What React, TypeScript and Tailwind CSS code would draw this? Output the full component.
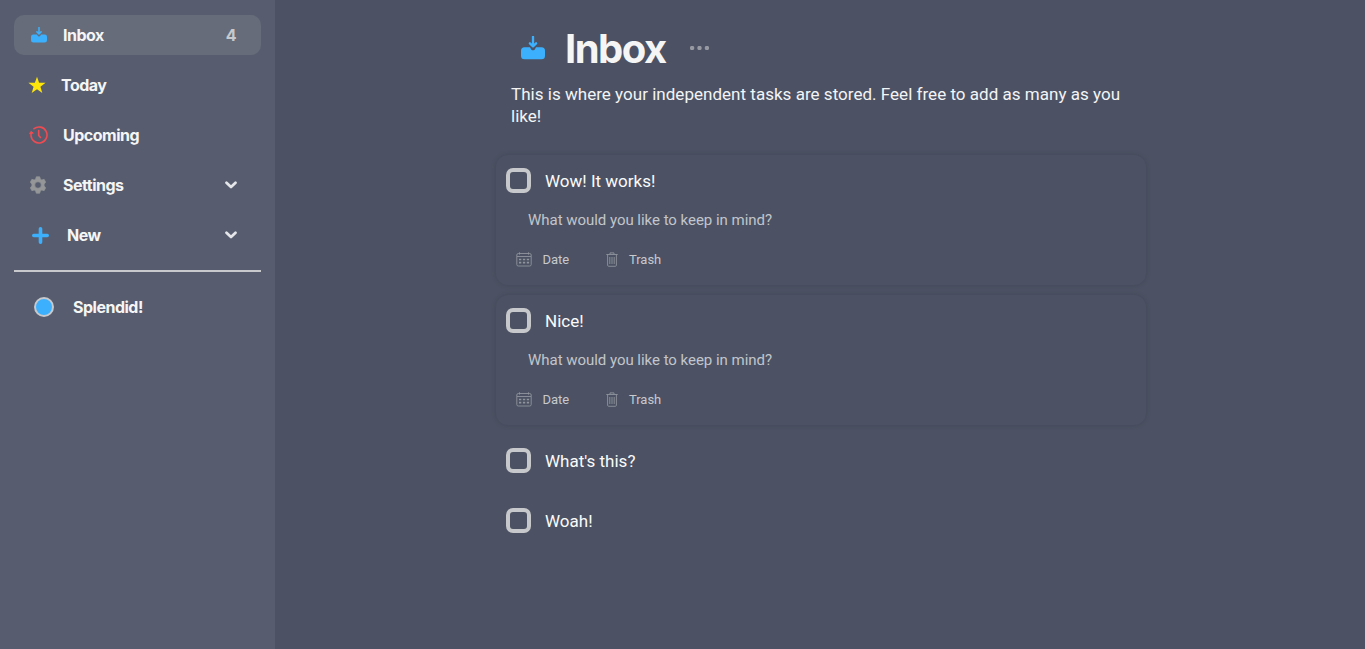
import type { ReactNode } from 'react';

function InboxIcon({ className }: { className: string }) {
  return (
    <svg className={className} viewBox="0 0 24 24" fill="#3cb0fd">
      <path d="M3.500 11.300h4.900c.9 0 1 .6 1.400 1.500.5 1 1.200 1.500 2.200 1.500s1.700-.5 2.200-1.500c.4-.9.5-1.500 1.400-1.500h4.900a3.500 3.500 0 0 1 3.500 3.500v4.900a3.500 3.500 0 0 1-3.500 3.500h-17A3.500 3.500 0 0 1 0 19.700v-4.900a3.500 3.500 0 0 1 3.500-3.500Z" />
      <path d="M12 .8v9M8.900 7.300 12 10.300l3.100-3" fill="none" stroke="#3cb0fd" strokeWidth="2.300" strokeLinecap="round" strokeLinejoin="round" />
    </svg>
  );
}

function ClockIcon() {
  return (
    <svg className="h-[19px] w-[19px]" viewBox="0 0 19 19" fill="none" stroke="#ef4b52" strokeWidth="1.600" strokeLinecap="round" strokeLinejoin="round">
      <path d="M5 2.700A8 8 0 1 1 2 9.500V7" />
      <path d="M.7 7.300 2 5.400l2 1.500Z" fill="#ef4b52" strokeWidth="1" />
      <path d="M9.700 4.500v5l1.800 2" />
    </svg>
  );
}

function GearIcon() {
  return (
    <svg className="h-[18px] w-4" viewBox="0 0 16 18">
      <path fillRule="evenodd" fill="#949698" stroke="#949698" strokeWidth=".7" strokeLinejoin="round" d="M6.300.8h3.400l.6 2.300 1.500.9 2.300-.7 1.600 3-1.600 1.700v2l1.600 1.700-1.600 3-2.300-.7-1.500.9-.6 2.300H6.300l-.6-2.300-1.500-.9-2.300.7-1.600-3L1.900 10V8L.3 6.300l1.600-3 2.300.7 1.500-.9ZM8 5.700a3.300 3.300 0 1 0 0 6.600 3.300 3.300 0 0 0 0-6.600Z" />
    </svg>
  );
}

function Chevron() {
  return (
    <svg className="h-2 w-3" viewBox="0 0 12 8" fill="none" stroke="#e4e6ea" strokeWidth="2.700" strokeLinecap="round" strokeLinejoin="round">
      <path d="m1.500 1.800 4.500 4.300 4.500-4.300" />
    </svg>
  );
}

function NavItem({ icon, label, iconClass, end, active }: { icon: ReactNode; label: string; iconClass: string; end?: ReactNode; active?: boolean }) {
  return (
    <div className={`flex h-10 items-center rounded-[10px] pr-6 ${active ? 'bg-[#666c7a]' : ''}`}>
      <span className={`flex shrink-0 items-center ${iconClass}`}>{icon}</span>
      <span className="flex-1">{label}</span>
      {end}
    </div>
  );
}

function CalendarIcon() {
  return (
    <svg className="h-[15px] w-4" viewBox="0 0 16 15" fill="none" stroke="#8f949d" strokeWidth=".9">
      <rect x=".8" y="1.500" width="14.400" height="12.500" rx="1.500" />
      <path d="M1 4.500h14M3.500 .3v2.300M12.500 .3v2.300" />
      <path d="M3 7.500h2.300M6.900 7.500h2.300M10.800 7.500h2.300M3 10.600h2.300M6.900 10.600h2.300M10.800 10.600h2.300" strokeWidth="1.600" />
    </svg>
  );
}

function TrashIcon() {
  return (
    <svg className="h-[15px] w-3" viewBox="0 0 12 15" fill="none" stroke="#8f949d" strokeWidth=".9">
      <path d="M.3 2.500h11.400M4 2.300V.9h4v1.400M1.600 2.500v10.700c0 .7.4 1.100 1.100 1.100h6.600c.7 0 1.100-.4 1.100-1.100V2.500M3.800 5v7M6 5v7M8.200 5v7" />
    </svg>
  );
}

function Task({ title, open }: { title: string; open?: boolean }) {
  return (
    <div className={`w-[650px] rounded-[12px] pl-2.5 ${open ? 'h-[130px] bg-[#4c5263] shadow-[0_0_5px_rgba(30,34,48,0.2)]' : 'h-[50px]'}`}>
      <div className="flex h-[50px] items-center gap-3.5">
        <span className="h-[25px] w-[25px] rounded-[7px] border-4 border-[#c7c8cb]" />
        <span className="pt-px text-[17px] leading-6 text-[#fafafa]">{title}</span>
      </div>
      {open && (
        <>
          <div className="flex h-[30px] items-center pl-[22px] text-[15px] tracking-[-0.03px] text-[#c2c5cb]">What would you like to keep in mind?</div>
          <div className="flex h-[49px] items-center pl-[10.400px] text-[13px] text-[#c7c9ce]">
            <CalendarIcon />
            <span className="ml-2.5 w-[63.500px] pt-px">Date</span>
            <TrashIcon />
            <span className="ml-[11px] pt-px">Trash</span>
          </div>
        </>
      )}
    </div>
  );
}

export default function App() {
  return (
    <div className="flex h-[649px] overflow-hidden bg-[#4c5263] font-['Roboto',sans-serif]">
      <aside className="w-[275px] shrink-0 bg-[#575d6e] px-3.5 pt-[15px] font-['Inter',sans-serif] text-[16px] font-bold tracking-[-0.5px] text-[#f5f5f5]">
        <nav className="flex flex-col gap-2.5">
          <NavItem active label="Inbox" iconClass="w-[49px] pl-[17px]" icon={<InboxIcon className="h-4 w-4" />} end={<span className="pr-px text-[#c7c9cc]">4</span>} />
          <NavItem
            label="Today"
            iconClass="w-[47px] pl-3.5 tracking-tighter"
            icon={
              <svg className="h-[18px] w-[18px]" viewBox="0 0 18 18" fill="#ffe60a">
                <path d="m9 .8 2.100 6H17.600l-5.200 3.900 1.900 6.300L9 13.300 3.700 17l1.900-6.300L.4 6.800h6.500Z" />
              </svg>
            }
          />
          <NavItem label="Upcoming" iconClass="w-[49px] pl-[15px]" icon={<ClockIcon />} />
          <NavItem label="Settings" iconClass="w-[49px] pl-4" icon={<GearIcon />} end={<Chevron />} />
          <NavItem
            label="New"
            iconClass="w-[53px] pl-[18px]"
            icon={
              <svg className="h-[17px] w-[17px]" viewBox="0 0 17 17" fill="none" stroke="#3cb0fd" strokeWidth="3.600" strokeLinecap="round">
                <path d="M8.500 1.800v13.400M1.800 8.500h13.400" />
              </svg>
            }
            end={<Chevron />}
          />
        </nav>
        <div className="mt-[15px] h-0.5 bg-[#c7c9cc]" />
        <div className="mt-[15px]">
          <NavItem label="Splendid!" iconClass="w-[59px] pl-5" icon={<span className="h-5 w-5 rounded-full border-2 border-[#c7c9cc] bg-[#3cb0fd]" />} />
        </div>
      </aside>
      <main className="flex-1 pl-[221px] pt-[21px]">
        <header className="flex h-14 items-center pl-[25.400px]">
          <InboxIcon className="mb-0.5 h-6 w-6" />
          <h1 className="ml-[19.600px] font-['Inter',sans-serif] text-[40px] font-bold leading-none tracking-[-1.500px] text-[#f5f5f5]">Inbox</h1>
          <svg className="mb-0.5 ml-6 h-1 w-[19px]" viewBox="0 0 19 4" fill="#9699a2">
            <circle cx="2.100" cy="2" r="2.200" />
            <circle cx="9.500" cy="2" r="2.200" />
            <circle cx="16.900" cy="2" r="2.200" />
          </svg>
        </header>
        <p className="ml-[15px] mt-1.5 w-[620px] text-[17px] leading-[22px] tracking-[0.025px] text-[#f3f4f5]">
          This is where your independent tasks are stored. Feel free to add as many as you like!
        </p>
        <section className="mt-7 flex flex-col gap-2.5">
          <Task title="Wow! It works!" open />
          <Task title="Nice!" open />
          <Task title="What's this?" />
          <Task title="Woah!" />
        </section>
      </main>
    </div>
  );
}
